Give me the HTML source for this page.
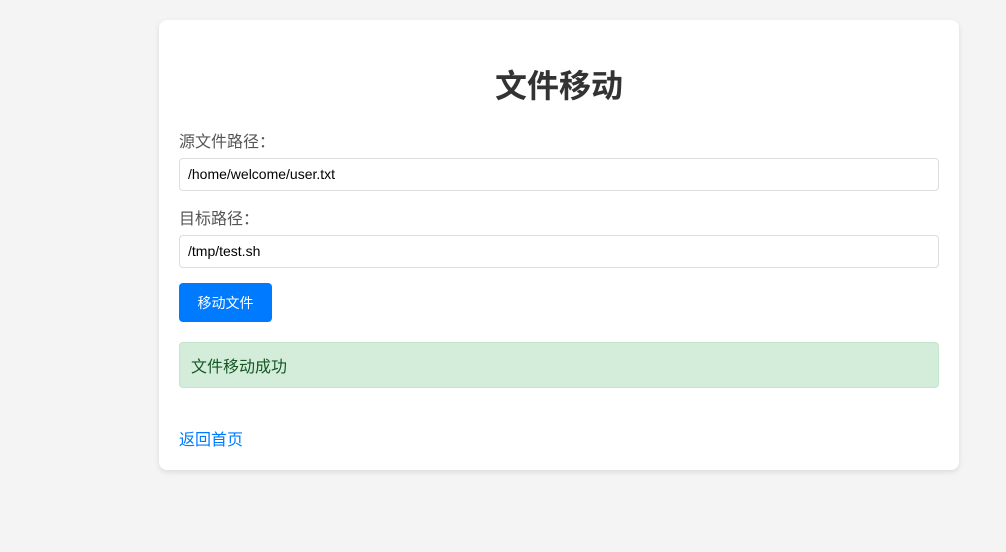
<!DOCTYPE html>
<html><head><meta charset="utf-8">
<style>
*{box-sizing:border-box;margin:0;padding:0}
body{width:1006px;height:552px;background:#f4f4f4;font-family:"Liberation Sans","Noto Sans CJK SC",sans-serif;position:relative;overflow:hidden}
.card{position:absolute;left:159px;top:20px;width:800px;height:450px;background:#fff;border-radius:8px;box-shadow:0 2px 6px rgba(0,0,0,0.1)}
h1{position:absolute;top:46px;left:0;width:100%;text-align:center;font-size:32px;line-height:40px;font-weight:bold;color:#333}
.lbl{position:absolute;left:20px;font-size:16px;color:#555;line-height:20px}
.inp{position:absolute;left:20px;width:760px;height:33px;border:1px solid #ddd;border-radius:4px;font-size:14px;color:#000;padding-left:8px;line-height:31px;font-family:"Liberation Sans",sans-serif}
.btn{position:absolute;left:20px;top:263px;width:93px;height:39px;background:#007bff;border-radius:4px;color:#fff;font-size:14px;text-align:center;line-height:41px}
.ok{position:absolute;left:20px;top:322px;width:760px;height:46px;background:#d4edda;border:1px solid #c3e6cb;border-radius:4px;color:#155724;font-size:16px;line-height:50px;padding-left:11px}
.link{position:absolute;left:20px;top:411px;font-size:16px;color:#007bff;line-height:20px}
</style></head><body>
<div class="card">
<h1>文件移动</h1>
<div class="lbl" style="top:113px">源文件路径：</div>
<div class="inp" style="top:138px">/home/welcome/user.txt</div>
<div class="lbl" style="top:190px">目标路径：</div>
<div class="inp" style="top:215px">/tmp/test.sh</div>
<div class="btn">移动文件</div>
<div class="ok">文件移动成功</div>
<div class="link">返回首页</div>
</div>
</body></html>
